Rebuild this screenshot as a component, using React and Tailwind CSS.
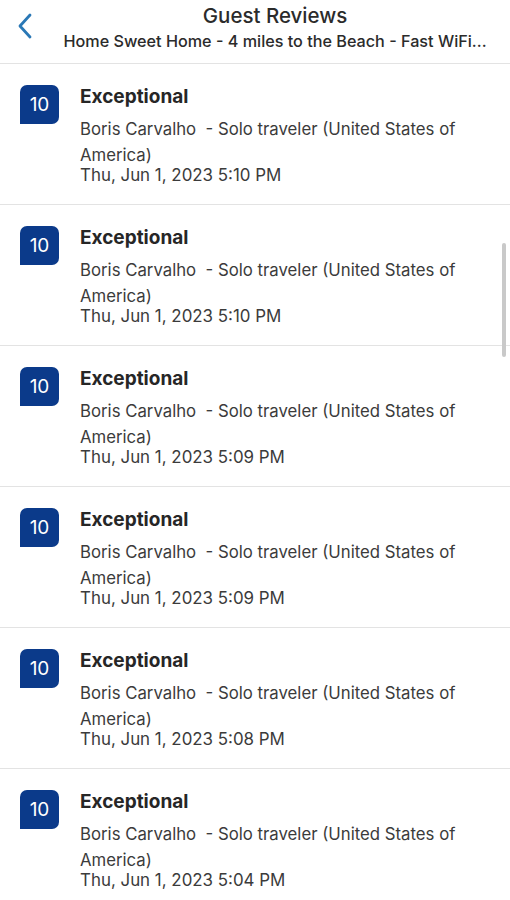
import React from 'react';

const reviews = [
    { score: 10, title: 'Exceptional', date: 'Thu, Jun 1, 2023 5:10 PM' },
    { score: 10, title: 'Exceptional', date: 'Thu, Jun 1, 2023 5:10 PM' },
    { score: 10, title: 'Exceptional', date: 'Thu, Jun 1, 2023 5:09 PM' },
    { score: 10, title: 'Exceptional', date: 'Thu, Jun 1, 2023 5:09 PM' },
    { score: 10, title: 'Exceptional', date: 'Thu, Jun 1, 2023 5:08 PM' },
    { score: 10, title: 'Exceptional', date: 'Thu, Jun 1, 2023 5:04 PM' },
];

const ReviewRow = ({ review }) => (
    <div className="h-[141px] shrink-0 border-b border-[#e3e3e3] flex pt-[21px] pl-[20px] pr-[30px] gap-[21px]">
        {/* Score badge */}
        <div className="w-[39px] h-[39px] shrink-0 bg-[#0b3a8a] text-white rounded-t-[7px] rounded-br-[7px] flex items-center justify-center text-[19px] leading-none">
            {review.score}
        </div>
        <div className="flex flex-col min-w-0">
            <div className="text-[19px] leading-[24px] font-bold text-[#262626]">{review.title}</div>
            <div className="mt-[7px] text-[16.75px] leading-[26px] text-[#3b3b3b] whitespace-pre-wrap">
                {'Boris Carvalho  - Solo traveler (United States of America)'}
            </div>
            <div className="-mt-[3px] text-[16.9px] leading-5 text-[#3b3b3b]">{review.date}</div>
        </div>
    </div>
);

export default function App() {
    return (
        <div className="w-[510px] h-[900px] bg-white overflow-hidden relative font-['Inter',sans-serif]">
            {/* Header */}
            <div className="h-[64px] border-b border-[#e3e3e3] flex items-start">
                <button className="w-[48px] h-[52px] flex items-center justify-center text-[#2a78b6] pl-[2px]">
                    <svg width="16" height="26" viewBox="0 0 16 26" fill="none" stroke="currentColor" strokeWidth="2.8" strokeLinecap="round" strokeLinejoin="round">
                        <path d="M13 2 L3 13 L13 24" />
                    </svg>
                </button>
                <div className="flex-1 flex flex-col items-center pr-[8px] pt-[3px]">
                    <div className="text-[20.5px] leading-[26px] font-medium text-[#2b2b2b]">Guest Reviews</div>
                    <div className="text-[16.2px] leading-[24px] font-medium text-[#2b2b2b] whitespace-nowrap">
                        Home Sweet Home - 4 miles to the Beach - Fast WiFi...
                    </div>
                </div>
            </div>

            {/* Reviews list */}
            <div className="flex flex-col">
                {reviews.map((r, i) => (
                    <ReviewRow key={i} review={r} />
                ))}
            </div>

            {/* Scroll indicator */}
            <div className="absolute left-[502px] top-[243px] w-[4px] h-[114px] rounded-full bg-[#c9c9c9]"></div>
        </div>
    );
}
